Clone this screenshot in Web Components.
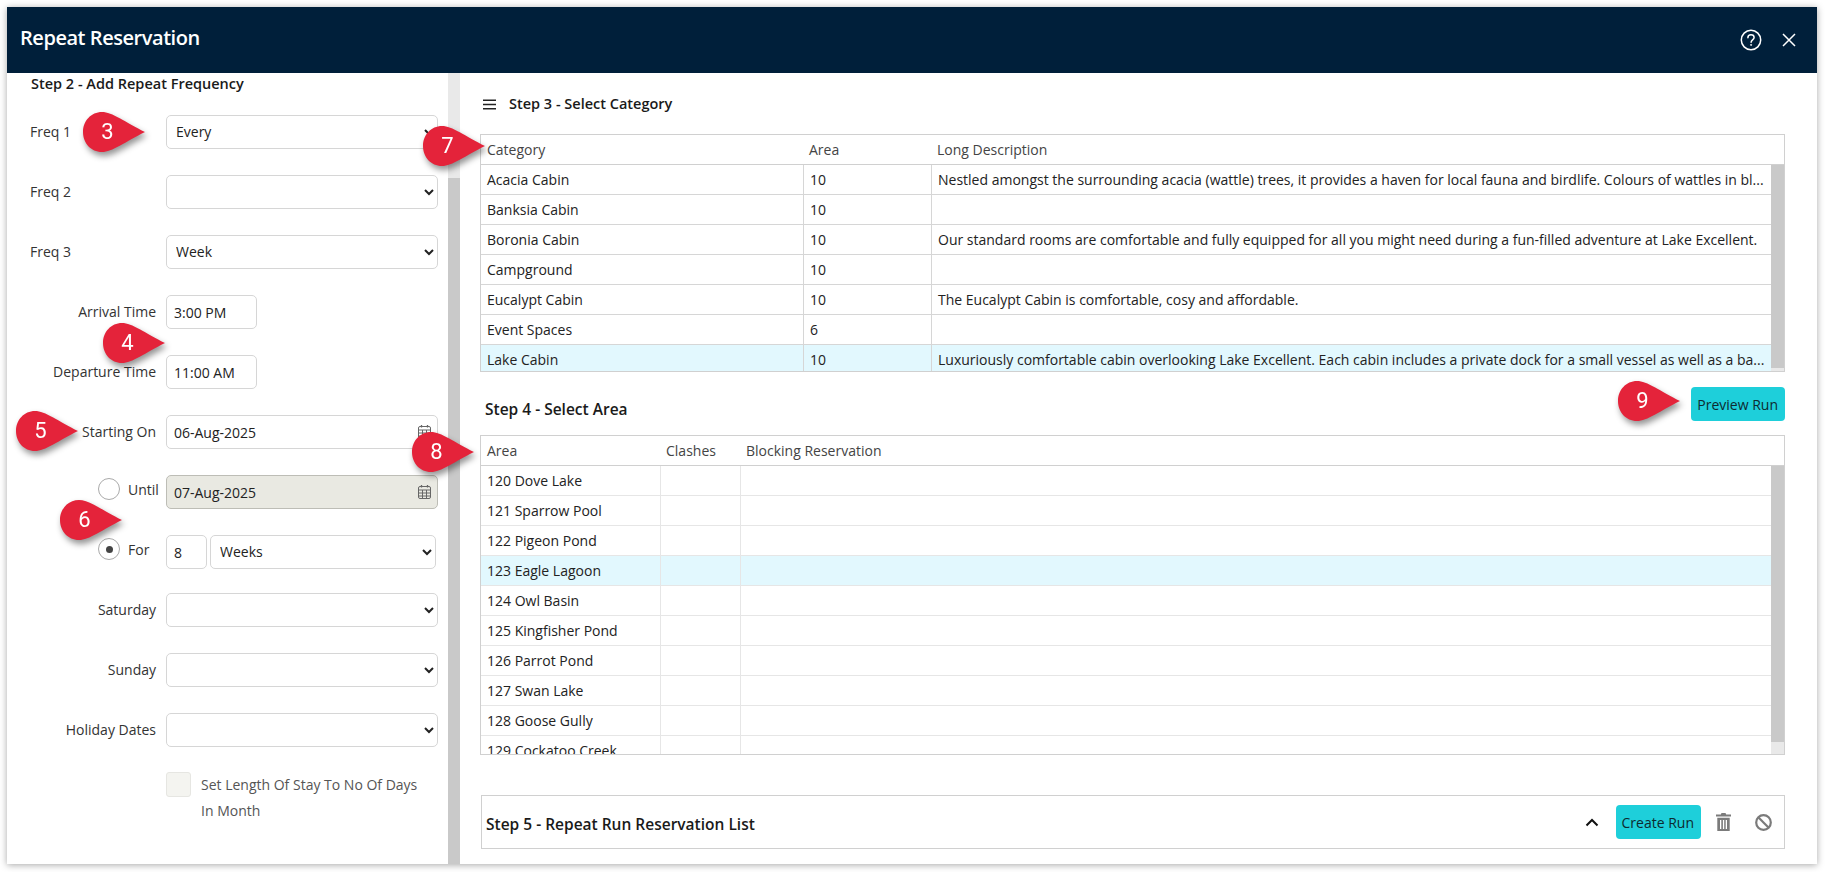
<!DOCTYPE html>
<html lang="en">
<head>
<meta charset="utf-8">
<title>Repeat Reservation</title>
<style>
    html, body { margin: 0; padding: 0; background: #fff; height: 100%; overflow: hidden; }
    body { font: 14px "Open Sans", "Liberation Sans", sans-serif; color: #222; }
</style>
</head>
<body>
<repeat-dialog>
    <dialog-header slot="header" heading="Repeat Reservation"></dialog-header>

    <frequency-panel slot="left"></frequency-panel>

    <step-title slot="right" menu style="margin-bottom:20px">Step 3 - Select Category</step-title>
    <data-grid slot="right" id="categories" height="238" track="3" line="#d6d6d6"
        columns="322px 128px 1fr"></data-grid>
    <step-bar slot="right">
        <step-title big style="margin-top:9px">Step 4 - Select Area</step-title>
        <action-button slot="actions">Preview Run</action-button>
    </step-bar>
    <data-grid slot="right" id="areas" height="320" track="12" line="#e6e6e6"
        columns="179px 80px 1fr"></data-grid>
    <run-list slot="right"></run-list>
</repeat-dialog>

<step-pin n="3" tip="145" mid="132"></step-pin>
<step-pin n="4" tip="165" mid="343"></step-pin>
<step-pin n="5" tip="78" mid="431"></step-pin>
<step-pin n="6" tip="122" mid="520"></step-pin>
<step-pin n="7" tip="485" mid="146"></step-pin>
<step-pin n="8" tip="474" mid="452"></step-pin>
<step-pin n="9" tip="1680" mid="401"></step-pin>

<script>
const FONT = `"Open Sans", "Liberation Sans", sans-serif`;

const CATEGORIES = [
    ["Acacia Cabin", "10", "Nestled amongst the surrounding acacia (wattle) trees, it provides a haven for local fauna and birdlife. Colours of wattles in bl..."],
    ["Banksia Cabin", "10", ""],
    ["Boronia Cabin", "10", "Our standard rooms are comfortable and fully equipped for all you might need during a fun-filled adventure at Lake Excellent."],
    ["Campground", "10", ""],
    ["Eucalypt Cabin", "10", "The Eucalypt Cabin is comfortable, cosy and affordable."],
    ["Event Spaces", "6", ""],
    ["Lake Cabin", "10", "Luxuriously comfortable cabin overlooking Lake Excellent. Each cabin includes a private dock for a small vessel as well as a ba..."],
];

const AREAS = [
    "120 Dove Lake", "121 Sparrow Pool", "122 Pigeon Pond", "123 Eagle Lagoon", "124 Owl Basin",
    "125 Kingfisher Pond", "126 Parrot Pond", "127 Swan Lake", "128 Goose Gully", "129 Cockatoo Creek",
].map((name) => [name, "", ""]);

class RepeatDialog extends HTMLElement {
    constructor() {
        super();
        this.attachShadow({ mode: "open" });
    }

    connectedCallback() {
        this.shadowRoot.innerHTML = `
            <style>
                :host {
                    display: flex;
                    flex-direction: column;
                    position: relative;
                    width: 1810px;
                    height: 857px;
                    margin: 7px 0 0 7px;
                    background: #fff;
                    box-shadow: 0 1px 7px rgba(0, 0, 0, .35);
                    overflow: hidden;
                }
                .body { flex: 1; display: flex; min-height: 0; }
                .left { width: 441px; flex: none; overflow: hidden; }
                .gutter { width: 12px; flex: none; background: #c9c9c9; }
                .gutter::before { content: ""; display: block; height: 105px; background: #e9e9e9; }
                .right { flex: 1; min-width: 0; padding: 21px 32px 0 20px; }
            </style>
            <slot name="header"></slot>
            <div class="body">
                <div class="left"><slot name="left"></slot></div>
                <div class="gutter"></div>
                <div class="right"><slot name="right"></slot></div>
            </div>
        `;
    }
}

class DialogHeader extends HTMLElement {
    constructor() {
        super();
        this.attachShadow({ mode: "open" });
    }

    connectedCallback() {
        this.shadowRoot.innerHTML = `
            <style>
                :host {
                    display: flex;
                    align-items: center;
                    height: 66px;
                    flex: none;
                    padding: 0 21px 0 13px;
                    background: #001f3a;
                    color: #fff;
                }
                h1 { flex: 1; margin: 0 0 6px; font: 600 20px ${FONT}; letter-spacing: -.45px; }
                svg { display: block; fill: none; stroke: #fff; }
                .help { margin-right: 20px; }
            </style>
            <h1>${this.getAttribute("heading")}</h1>
            <svg class="help" width="22" height="22" viewBox="0 0 22 22" stroke-width="1.5">
                <circle cx="11" cy="11" r="9.7"/>
                <path d="M7.9 8.7c0-1.8 1.4-2.9 3.1-2.9s3.1 1.1 3.1 2.7c0 2.3-3 2.5-3 4.7" stroke-linecap="round"/>
                <circle cx="11.1" cy="15.9" r=".6" stroke-width="1"/>
            </svg>
            <svg width="14" height="14" viewBox="0 0 14 14" stroke-width="1.5">
                <path d="M1 1l12 12M13 1L1 13"/>
            </svg>
        `;
    }
}

class FormRow extends HTMLElement {
    constructor() {
        super();
        this.attachShadow({ mode: "open" });
    }

    connectedCallback() {
        const align = this.getAttribute("align") || "right";
        this.shadowRoot.innerHTML = `
            <style>
                :host {
                    display: grid;
                    grid-template-columns: 126px 272px;
                    column-gap: 10px;
                    align-items: center;
                    height: 34px;
                    margin-bottom: 26px;
                    color: #333;
                }
                .label { text-align: ${align}; padding-bottom: 2px; }
            </style>
            <div class="label">${this.getAttribute("label") || ""}</div>
            <slot></slot>
        `;
    }
}

class SelectBox extends HTMLElement {
    constructor() {
        super();
        this.attachShadow({ mode: "open" });
    }

    connectedCallback() {
        const value = this.getAttribute("value") || "";
        this.shadowRoot.innerHTML = `
            <style>
                :host { display: block; min-width: 0; }
                select {
                    display: block;
                    width: 100%;
                    height: 34px;
                    padding: 0 5px 2px;
                    box-sizing: border-box;
                    border: 1px solid #d6d6d6;
                    border-radius: 5px;
                    background-color: #fff;
                    color: #222;
                    font: 14px ${FONT};
                }
            </style>
            <select><option>${value}</option></select>
        `;
    }
}

class TextBox extends HTMLElement {
    constructor() {
        super();
        this.attachShadow({ mode: "open" });
    }

    connectedCallback() {
        const disabled = this.hasAttribute("disabled");
        const calendar = this.hasAttribute("calendar") ? `
            <svg width="13" height="14" viewBox="0 0 13 14" fill="none" stroke="#666" stroke-width="1">
                <rect x=".5" y="1.5" width="12" height="12" rx="1.5"/>
                <path d="M.5 5h12M.5 8h12M.5 11h12M4.5 5v8.500M8.500 5v8.500"/>
                <path d="M3.500 0v2.500M9.500 0v2.500" stroke-width="1.3"/>
            </svg>` : "";
        this.shadowRoot.innerHTML = `
            <style>
                :host {
                    display: flex;
                    align-items: center;
                    justify-content: space-between;
                    height: 34px;
                    padding: 0 6px 0 7px;
                    box-sizing: border-box;
                    border: 1px solid ${disabled ? "#bdbdb6" : "#d6d6d6"};
                    border-radius: 5px;
                    background: ${disabled ? "#e9e9e2" : "#fff"};
                    color: #222;
                }
                svg { display: block; }
            </style>
            <span><slot></slot></span>
            ${calendar}
        `;
    }
}

class RadioOption extends HTMLElement {
    constructor() {
        super();
        this.attachShadow({ mode: "open" });
    }

    connectedCallback() {
        const checked = this.hasAttribute("checked");
        this.shadowRoot.innerHTML = `
            <style>
                :host {
                    display: flex;
                    align-items: center;
                    gap: 8px;
                    margin: -6px 0 0 68px;
                    color: #333;
                }
                i {
                    display: flex;
                    align-items: center;
                    justify-content: center;
                    flex: none;
                    width: 22px;
                    height: 22px;
                    box-sizing: border-box;
                    border: 1px solid #aaa;
                    border-radius: 50%;
                    background: #fff;
                }
                i.on::after { content: ""; width: 7px; height: 7px; border-radius: 50%; background: #444; }
            </style>
            <i class="${checked ? "on" : ""}"></i>
            <span><slot></slot></span>
        `;
    }
}

class FrequencyPanel extends HTMLElement {
    constructor() {
        super();
        this.attachShadow({ mode: "open" });
    }

    connectedCallback() {
        this.shadowRoot.innerHTML = `
            <style>
                :host { display: block; padding: 1px 0 0 23px; }
                h2 { margin: 0 0 21px 1px; font: 600 14.5px/20px ${FONT}; color: #1a1a1a; }
                .time { width: 91px; }
                .pair { display: flex; gap: 3px; width: 270px; }
                .pair text-box { width: 41px; flex: none; }
                .pair select-box { flex: 1; }
                .stay { display: flex; gap: 10px; margin: -1px 0 0 136px; width: 260px; color: #555; line-height: 26px; }
                .stay i {
                    flex: none;
                    width: 25px;
                    height: 25px;
                    box-sizing: border-box;
                    border: 1px solid #e6e6e2;
                    border-radius: 3px;
                    background: #f4f4f0;
                }
                .stay span { width: 225px; }
                .for { margin-bottom: 24px; }
            </style>
            <h2>Step 2 - Add Repeat Frequency</h2>
            <form-row label="Freq 1" align="left"><select-box value="Every"></select-box></form-row>
            <form-row label="Freq 2" align="left"><select-box></select-box></form-row>
            <form-row label="Freq 3" align="left"><select-box value="Week"></select-box></form-row>
            <form-row label="Arrival Time"><text-box class="time">3:00 PM</text-box></form-row>
            <form-row label="Departure Time"><text-box class="time">11:00 AM</text-box></form-row>
            <form-row label="Starting On"><text-box calendar>06-Aug-2025</text-box></form-row>
            <form-row>
                <radio-option style="grid-column:1;grid-row:1">Until</radio-option>
                <text-box style="grid-column:2;grid-row:1" calendar disabled>07-Aug-2025</text-box>
            </form-row>
            <form-row class="for">
                <radio-option style="grid-column:1;grid-row:1" checked>For</radio-option>
                <div class="pair" style="grid-column:2;grid-row:1">
                    <text-box>8</text-box>
                    <select-box value="Weeks"></select-box>
                </div>
            </form-row>
            <form-row label="Saturday"><select-box></select-box></form-row>
            <form-row label="Sunday"><select-box></select-box></form-row>
            <form-row label="Holiday Dates"><select-box></select-box></form-row>
            <div class="stay"><i></i><span>Set Length Of Stay To No Of Days In Month</span></div>
        `;
    }
}

class StepTitle extends HTMLElement {
    constructor() {
        super();
        this.attachShadow({ mode: "open" });
    }

    connectedCallback() {
        const menu = this.hasAttribute("menu") ? `
            <svg width="13" height="11" viewBox="0 0 13 11" stroke="#222" stroke-width="1.6">
                <path d="M0 1.2h13M0 5.500h13M0 9.800h13"/>
            </svg>` : "";
        const size = this.hasAttribute("big") ? 15.5 : 14.5;
        this.shadowRoot.innerHTML = `
            <style>
                :host {
                    display: flex;
                    align-items: center;
                    gap: 13px;
                    padding-left: 3px;
                    font: 600 ${size}px/20px ${FONT};
                    color: #1a1a1a;
                }
                svg { display: block; }
            </style>
            ${menu}
            <span><slot></slot></span>
        `;
    }
}

class StepBar extends HTMLElement {
    constructor() {
        super();
        this.attachShadow({ mode: "open" });
    }

    connectedCallback() {
        this.shadowRoot.innerHTML = `
            <style>
                :host {
                    display: flex;
                    align-items: center;
                    justify-content: space-between;
                    margin: 15px 0 14px;
                    padding-left: 2px;
                }
            </style>
            <slot></slot>
            <slot name="actions"></slot>
        `;
    }
}

class ActionButton extends HTMLElement {
    constructor() {
        super();
        this.attachShadow({ mode: "open" });
    }

    connectedCallback() {
        this.shadowRoot.innerHTML = `
            <style>
                :host {
                    display: inline-flex;
                    align-items: center;
                    height: 34px;
                    padding: 0 7px 0 6px;
                    border-radius: 4px;
                    background: #1ecfda;
                    color: #0d2b30;
                    font: 14px ${FONT};
                }
            </style>
            <slot></slot>
        `;
    }
}

class DataGrid extends HTMLElement {
    constructor() {
        super();
        this.attachShadow({ mode: "open" });
    }

    set data({ headers, rows, selected }) {
        const cols = this.getAttribute("columns");
        const cells = (row) => row.map((c) => `<div class="c">${c}</div>`).join("");
        this.shadowRoot.innerHTML = `
            <style>
                :host {
                    display: flex;
                    flex-direction: column;
                    height: ${this.getAttribute("height")}px;
                    box-sizing: border-box;
                    border: 1px solid #d0d0d0;
                    overflow: hidden;
                }
                .r { display: grid; grid-template-columns: ${cols}; height: 30px; box-sizing: border-box; }
                .head { flex: none; height: 30px; border-bottom: 1px solid #d0d0d0; color: #444; }
                .head .c { border: 0; }
                .body { flex: 1; display: flex; min-height: 0; }
                .rows { flex: 1; min-width: 0; overflow: hidden; }
                .rows .r { border-bottom: 1px solid ${this.getAttribute("line")}; color: #222; }
                .rows .c + .c { border-left: 1px solid ${this.getAttribute("line")}; }
                .rows .on { background: #e2f8fe; }
                .c {
                    padding: 0 4px 0 6px;
                    line-height: 29px;
                    white-space: nowrap;
                    overflow: hidden;
                }
                .bar { flex: none; width: 13px; display: flex; flex-direction: column; background: #c9c9c9; }
                .bar::after { content: ""; height: ${this.getAttribute("track")}px; margin-top: auto; background: #e9e9e9; }
            </style>
            <div class="r head">${cells(headers)}</div>
            <div class="body">
                <div class="rows">
                    ${rows.map((row, i) => `<div class="r ${i === selected ? "on" : ""}">${cells(row)}</div>`).join("")}
                </div>
                <div class="bar"></div>
            </div>
        `;
    }
}

class RunList extends HTMLElement {
    constructor() {
        super();
        this.attachShadow({ mode: "open" });
    }

    connectedCallback() {
        this.shadowRoot.innerHTML = `
            <style>
                :host {
                    display: flex;
                    align-items: center;
                    height: 54px;
                    margin: 40px 0 0 1px;
                    padding: 0 12px 0 1px;
                    box-sizing: border-box;
                    border: 1px solid #d0d0d0;
                }
                .title { flex: 1; margin-top: 4px; }
                svg { display: block; flex: none; }
                .up { margin-right: 17px; }
                .trash { margin: 0 0 0 15px; }
                .ban { margin-left: 24px; }
            </style>
            <step-title class="title" big>Step 5 - Repeat Run Reservation List</step-title>
            <svg class="up" width="14" height="9" viewBox="0 0 14 9" fill="none" stroke="#111" stroke-width="2">
                <path d="M1.500 7.500L7 2l5.500 5.500"/>
            </svg>
            <action-button>Create Run</action-button>
            <svg class="trash" width="15" height="18" viewBox="0 0 15 18" fill="#7b7b7b">
                <path d="M5.500 0h4l.7 1.600H15v2H0v-2h4.800z"/>
                <path fill-rule="evenodd" d="M1.300 4.800h12.400V18H1.300zM4 7v9h1.300V7zm2.900 0v9h1.300V7zM9.700 7v9H11V7z"/>
            </svg>
            <svg class="ban" width="17" height="17" viewBox="0 0 17 17" fill="none" stroke="#7b7b7b" stroke-width="2.200">
                <circle cx="8.500" cy="8.500" r="7.300"/>
                <path d="M3.300 3.300l10.400 10.400"/>
            </svg>
        `;
    }
}

class StepPin extends HTMLElement {
    constructor() {
        super();
        this.attachShadow({ mode: "open" });
    }

    connectedCallback() {
        const tip = Number(this.getAttribute("tip"));
        const mid = Number(this.getAttribute("mid"));
        this.shadowRoot.innerHTML = `
            <style>
                :host {
                    position: absolute;
                    left: ${tip - 62}px;
                    top: ${mid - 20}px;
                    width: 62px;
                    height: 40px;
                    filter: drop-shadow(2px 4px 3px rgba(0, 0, 0, .42));
                }
                svg { position: absolute; inset: 0; display: block; }
                span {
                    position: absolute;
                    left: 0;
                    top: 0;
                    width: 49px;
                    text-align: center;
                    font: 22px/40px Roboto, "Liberation Sans", sans-serif;
                    color: #fff;
                }
            </style>
            <svg width="62" height="40" viewBox="0 0 62 40">
                <path fill="#e4233a" d="M19 0C29 0 42 10 62 20C42 30 29 40 19 40C8 40 0 31 0 20C0 9 8 0 19 0Z"/>
            </svg>
            <span>${this.getAttribute("n")}</span>
        `;
    }
}

customElements.define("repeat-dialog", RepeatDialog);
customElements.define("dialog-header", DialogHeader);
customElements.define("form-row", FormRow);
customElements.define("select-box", SelectBox);
customElements.define("text-box", TextBox);
customElements.define("radio-option", RadioOption);
customElements.define("frequency-panel", FrequencyPanel);
customElements.define("step-title", StepTitle);
customElements.define("step-bar", StepBar);
customElements.define("action-button", ActionButton);
customElements.define("data-grid", DataGrid);
customElements.define("run-list", RunList);
customElements.define("step-pin", StepPin);

document.getElementById("categories").data = {
    headers: ["Category", "Area", "Long Description"],
    rows: CATEGORIES,
    selected: 6,
};
document.getElementById("areas").data = {
    headers: ["Area", "Clashes", "Blocking Reservation"],
    rows: AREAS,
    selected: 3,
};
</script>
</body>
</html>
